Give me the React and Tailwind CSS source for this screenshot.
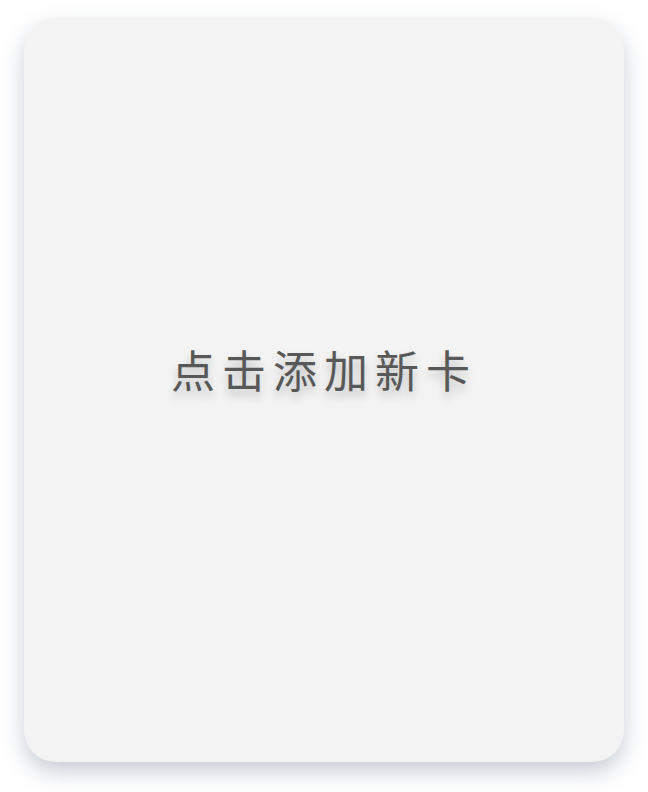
export default function App() {
  return (
    <div className="min-h-screen bg-white pt-[18px] pl-[24px]">
      <button className="flex h-[744px] w-[600px] items-center justify-center rounded-[32px] bg-[#f3f3f3] pb-[43px] shadow-[0_10px_22px_rgba(100,116,139,0.35)]">
        <span
          className="text-[44px] leading-none tracking-[7px] text-[#585858] [text-shadow:0_6px_10px_rgba(0,0,0,0.22)]"
          style={{ fontFamily: '"Noto Sans CJK SC", sans-serif' }}
        >
          点击添加新卡
        </span>
      </button>
    </div>
  );
}
